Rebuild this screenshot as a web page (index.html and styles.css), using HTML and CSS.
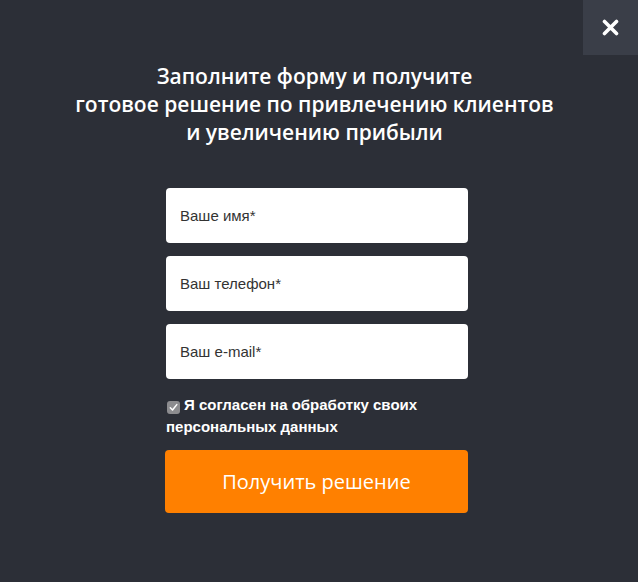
FILE: index.html
```html
<!DOCTYPE html>
<html lang="ru">
<head>
    <meta charset="UTF-8">
    <meta name="viewport" content="width=device-width, initial-scale=1.0">
    <title>Получить решение</title>
    <link rel="stylesheet" href="styles.css">
</head>
<body>
    <div class="modal">
        <button class="close" type="button" aria-label="Закрыть">
            <svg width="17" height="17" viewBox="0 0 17 17">
                <path d="M2.5 2.5 L14.5 14.5 M14.5 2.5 L2.5 14.5" stroke="#fff" stroke-width="3.6" stroke-linecap="round"/>
            </svg>
        </button>

        <h2 class="title">Заполните форму и получите<br>готовое решение по привлечению клиентов<br>и увеличению прибыли</h2>

        <form class="form" onsubmit="return false">
            <input class="field" type="text" placeholder="Ваше имя*">
            <input class="field" type="tel" placeholder="Ваш телефон*">
            <input class="field" type="email" placeholder="Ваш e-mail*">

            <label class="agree">
                <span class="check">
                    <svg width="9" height="9" viewBox="0 0 9 9">
                        <path d="M1.3 4.8 L3.5 7 L7.8 1.6" fill="none" stroke="#fff" stroke-width="1.5" stroke-linecap="round" stroke-linejoin="round"/>
                    </svg>
                </span>Я согласен на обработку своих персональных данных
            </label>

            <button class="submit" type="submit">Получить решение</button>
        </form>
    </div>
</body>
</html>
```

FILE: styles.css
```css
body {
    margin: 0;
    background-color: #2c2f37;
    font-family: "Liberation Sans", Arial, sans-serif;
}
.modal {
    position: relative;
    min-height: 582px;
    padding: 62px 4px 0 0;
    box-sizing: border-box;
}
.close {
    position: absolute;
    top: 0;
    right: 0;
    width: 55px;
    height: 55px;
    border: none;
    padding: 0;
    background: #3a3e48;
    cursor: pointer;
    display: flex;
    align-items: center;
    justify-content: center;
}
.title {
    margin: 0;
    padding-right: 5px;
    color: #fff;
    text-align: center;
    font-family: "Open Sans", sans-serif;
    font-size: 21px;
    font-weight: 600;
    line-height: 28px;
}
.form {
    width: 302px;
    margin: 42px auto 0;
    display: flex;
    flex-direction: column;
}
.field {
    height: 55px;
    margin-bottom: 13px;
    border: none;
    border-radius: 4px;
    padding: 0 14px;
    background: #fff;
    font-family: "Liberation Sans", Arial, sans-serif;
    font-size: 15px;
    color: #333;
    outline: none;
}
.field::placeholder {
    color: #333;
}
.agree {
    margin-top: 2px;
    color: #fff;
    font-size: 15px;
    font-weight: bold;
    line-height: 22px;
    cursor: pointer;
}
.check {
    display: inline-flex;
    align-items: center;
    justify-content: center;
    width: 13px;
    height: 13px;
    margin: 0 4px 0 1px;
    border-radius: 3px;
    background: #8c8c8f;
    vertical-align: -2px;
}
.submit {
    height: 63px;
    margin: 12px 0 0 -1px;
    border: none;
    border-radius: 4px;
    background: #ff8000;
    color: #fff;
    font-family: "Open Sans", sans-serif;
    font-size: 20px;
    font-weight: 500;
    cursor: pointer;
}
```
